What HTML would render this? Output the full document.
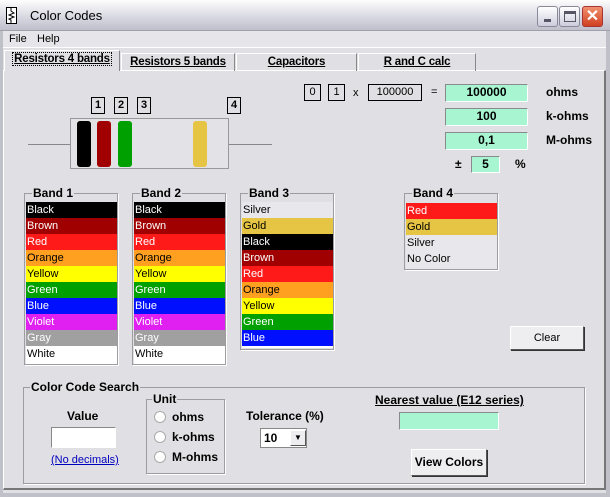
<!DOCTYPE html>
<html><head><meta charset="utf-8"><style>
*{margin:0;padding:0;box-sizing:border-box}
body{width:610px;height:497px;background:#e0dfe3;font-family:"Liberation Sans",sans-serif;font-size:11px;position:relative;overflow:hidden;color:#000}
.a{position:absolute}
.b{font-weight:bold;font-size:12px}
.box{position:absolute;border:1px solid #000;background:#e0dfe3;text-align:center;font-size:11px;line-height:15px}
.g{position:absolute;background:#a8f5d2;border:1px solid #fff;border-top-color:#8a8a8a;border-left-color:#8a8a8a;text-align:center;font-weight:bold;font-size:12px;line-height:15px}
.fr{position:absolute;border:1px solid #9d9da1;box-shadow:1px 1px 0 #fff}
.lg{position:absolute;top:-8px;left:6px;background:#e0dfe3;font-weight:bold;font-size:12px;padding:0 1px;line-height:14px}
.list{position:absolute;background:#fff;border:1px solid #9d9da1}
.list div{height:16px;line-height:16px;padding-left:1px;font-size:11px}
.btn{position:absolute;background:#eeeef0;border:1px solid #555;border-top-color:#fff;border-left-color:#fff;box-shadow:1px 1px 0 #333;text-align:center}
.tab{position:absolute;top:53px;height:18px;border:1px solid #fff;border-right-color:#888;border-bottom:none;text-align:center;font-weight:bold;font-size:11.5px;line-height:16px;letter-spacing:-0.2px}
.tab span{text-decoration:underline}
</style></head><body>
<div class="a" style="left:0;top:0;width:610px;height:31px;background:linear-gradient(#fdfdfd,#d6d6e0 60%,#c0c0cc);border-bottom:1px solid #a0a0aa"></div>
<div class="a" style="left:6px;top:7px;width:11px;height:17px;border:1px solid #000;background:#fff"></div>
<svg class="a" style="left:7px;top:8px" width="9" height="15"><path d="M4 0V3L7 5L2 7L7 9L2 11L4 12V15" fill="none" stroke="#000"/></svg>
<div class="a" style="left:30px;top:8px;font-size:13px">Color Codes</div>
<div class="a" style="left:537px;top:6px;width:21px;height:21px;border:1px solid #889;border-radius:3px;background:linear-gradient(#fff,#ccd)"><div class="a" style="left:6px;top:12px;width:7px;height:3px;background:#556"></div></div>
<div class="a" style="left:559px;top:6px;width:21px;height:21px;border:1px solid #889;border-radius:3px;background:linear-gradient(#fff,#ccd)"><div class="a" style="left:4px;top:4px;width:12px;height:11px;border:1px solid #556;border-top-width:3px"></div></div>
<div class="a" style="left:582px;top:6px;width:21px;height:21px;border:1px solid #a33;border-radius:3px;background:linear-gradient(#f09070,#d04020);color:#fff;font-size:16px;line-height:19px;text-align:center;font-weight:bold">✕</div>
<div class="a" style="left:0;top:31px;width:3px;height:466px;background:#c0c0c8"></div>
<div class="a" style="right:0;top:31px;width:4px;height:466px;background:#c0c0c8"></div>
<div class="a" style="left:0;bottom:0;width:610px;height:4px;background:#c0c0c8"></div>
<div class="a" style="left:3px;top:31px;width:603px;height:17px;background:#e6e6ea;border-bottom:1px solid #fff"></div>
<div class="a" style="left:9px;top:33px;font-size:11px">File</div>
<div class="a" style="left:37px;top:33px;font-size:11px">Help</div>
<div class="a" style="left:3px;top:70px;width:603px;height:420px;border:1px solid #fff;border-right:2px solid #777;border-bottom:2px solid #777"></div>
<div class="tab" style="left:4px;top:50px;width:116px;height:21px;background:#e0dfe3"><span style="outline:1px dotted #000;text-decoration:underline;padding:0 1px">Resistors 4 bands</span></div>
<div class="tab" style="left:121px;width:114px"><span>Resistors 5 bands</span></div>
<div class="tab" style="left:236px;width:121px"><span style="padding:0 18px">Capacitors</span></div>
<div class="tab" style="left:358px;width:118px"><span style="padding:0 18px">R and C calc</span></div>
<div class="box" style="left:304px;top:84px;width:17px;height:17px">0</div>
<div class="box" style="left:328px;top:84px;width:17px;height:17px">1</div>
<div class="a" style="left:353px;top:87px">x</div>
<div class="box" style="left:368px;top:84px;width:54px;height:17px">100000</div>
<div class="a" style="left:431px;top:86px">=</div>
<div class="g" style="left:445px;top:84px;width:83px;height:18px">100000</div>
<div class="g" style="left:445px;top:108px;width:83px;height:18px">100</div>
<div class="g" style="left:445px;top:132px;width:83px;height:18px">0,1</div>
<div class="a b" style="left:546px;top:85px">ohms</div>
<div class="a b" style="left:546px;top:109px">k-ohms</div>
<div class="a b" style="left:546px;top:133px">M-ohms</div>
<div class="a b" style="left:455px;top:157px">±</div>
<div class="g" style="left:471px;top:156px;width:29px;height:17px">5</div>
<div class="a b" style="left:515px;top:157px">%</div>
<div class="box b" style="left:91px;top:97px;width:14px;height:17px;line-height:15px">1</div>
<div class="box b" style="left:114px;top:97px;width:14px;height:17px;line-height:15px">2</div>
<div class="box b" style="left:137px;top:97px;width:14px;height:17px;line-height:15px">3</div>
<div class="box b" style="left:227px;top:97px;width:14px;height:17px;line-height:15px">4</div>
<div class="a" style="left:28px;top:144px;width:43px;height:1px;background:#888"></div>
<div class="a" style="left:229px;top:144px;width:43px;height:1px;background:#888"></div>
<div class="a" style="left:70px;top:118px;width:159px;height:51px;border:1px solid #999;background:#e3e3e7"></div>
<div class="a" style="left:77px;top:121px;width:14px;height:46px;background:#000;border-radius:3px"></div>
<div class="a" style="left:97px;top:121px;width:14px;height:46px;background:#a00000;border-radius:3px"></div>
<div class="a" style="left:118px;top:121px;width:14px;height:46px;background:#00a000;border-radius:3px"></div>
<div class="a" style="left:193px;top:121px;width:14px;height:46px;background:#e6c545;border-radius:3px"></div>
<div class="fr" style="left:24px;top:193px;width:94px;height:172px"><div class="lg" style="left:7px">Band 1</div></div>
<div class="list" style="left:26px;top:202px;width:91px;height:162px;border:none">
<div style="background:#000;color:#fff">Black</div><div style="background:#a00000;color:#fff">Brown</div><div style="background:#ff1a1a;color:#fff">Red</div><div style="background:#ffa020">Orange</div><div style="background:#ffff00">Yellow</div><div style="background:#00a000;color:#fff">Green</div><div style="background:#0010ff;color:#fff">Blue</div><div style="background:#e020f0;color:#fff">Violet</div><div style="background:#a0a0a0;color:#fff">Gray</div><div style="background:#fff">White</div></div>
<div class="fr" style="left:132px;top:193px;width:94px;height:172px"><div class="lg" style="left:7px">Band 2</div></div>
<div class="list" style="left:134px;top:202px;width:91px;height:162px;border:none">
<div style="background:#000;color:#fff">Black</div><div style="background:#a00000;color:#fff">Brown</div><div style="background:#ff1a1a;color:#fff">Red</div><div style="background:#ffa020">Orange</div><div style="background:#ffff00">Yellow</div><div style="background:#00a000;color:#fff">Green</div><div style="background:#0010ff;color:#fff">Blue</div><div style="background:#e020f0;color:#fff">Violet</div><div style="background:#a0a0a0;color:#fff">Gray</div><div style="background:#fff">White</div></div>
<div class="fr" style="left:240px;top:193px;width:94px;height:157px"><div class="lg" style="left:7px">Band 3</div></div>
<div class="list" style="left:242px;top:202px;width:91px;height:146px;border:none">
<div style="background:#e8e8ec">Silver</div><div style="background:#e6c545">Gold</div><div style="background:#000;color:#fff">Black</div><div style="background:#a00000;color:#fff">Brown</div><div style="background:#ff1a1a;color:#fff">Red</div><div style="background:#ffa020">Orange</div><div style="background:#ffff00">Yellow</div><div style="background:#00a000;color:#fff">Green</div><div style="background:#0010ff;color:#fff">Blue</div></div>
<div class="fr" style="left:404px;top:193px;width:94px;height:77px"><div class="lg" style="left:7px">Band 4</div></div>
<div class="list" style="left:406px;top:203px;width:91px;height:66px;border:none;background:#e8e8ec">
<div style="background:#ff1a1a;color:#fff">Red</div><div style="background:#e6c545">Gold</div><div>Silver</div><div>No Color</div></div>
<div class="btn" style="left:510px;top:326px;width:74px;height:24px;line-height:22px;font-size:11px">Clear</div>
<div class="fr" style="left:23px;top:387px;width:562px;height:97px"><div class="lg" style="left:6px">Color Code Search</div></div>
<div class="a b" style="left:67px;top:409px">Value</div>
<div class="a" style="left:51px;top:427px;width:65px;height:21px;background:#fff;border:1px solid #888;border-right-color:#fff;border-bottom-color:#fff"></div>
<div class="a" style="left:51px;top:454px;color:#0000c0;text-decoration:underline;font-size:11px">(No decimals)</div>
<div class="fr" style="left:146px;top:399px;width:79px;height:75px"><div class="lg" style="left:5px">Unit</div></div>
<div class="a" style="left:154px;top:411px;width:12px;height:12px;border-radius:50%;background:#fff;border:1px solid #aaa"></div>
<div class="a b" style="left:172px;top:410px">ohms</div>
<div class="a" style="left:154px;top:431px;width:12px;height:12px;border-radius:50%;background:#fff;border:1px solid #aaa"></div>
<div class="a b" style="left:172px;top:430px">k-ohms</div>
<div class="a" style="left:154px;top:451px;width:12px;height:12px;border-radius:50%;background:#fff;border:1px solid #aaa"></div>
<div class="a b" style="left:172px;top:450px">M-ohms</div>
<div class="a b" style="left:246px;top:409px">Tolerance (%)</div>
<div class="a" style="left:260px;top:428px;width:47px;height:20px;background:#fff;border:1px solid #888"><span class="a b" style="left:3px;top:2px">10</span><div class="btn" style="left:29px;top:1px;width:16px;height:16px;font-size:8px;line-height:14px;box-shadow:none">▼</div></div>
<div class="a b" style="left:375px;top:393px;text-decoration:underline">Nearest value (E12 series)</div>
<div class="g" style="left:399px;top:412px;width:100px;height:18px"></div>
<div class="btn b" style="left:411px;top:449px;width:76px;height:27px;line-height:25px">View Colors</div>
</body></html>
